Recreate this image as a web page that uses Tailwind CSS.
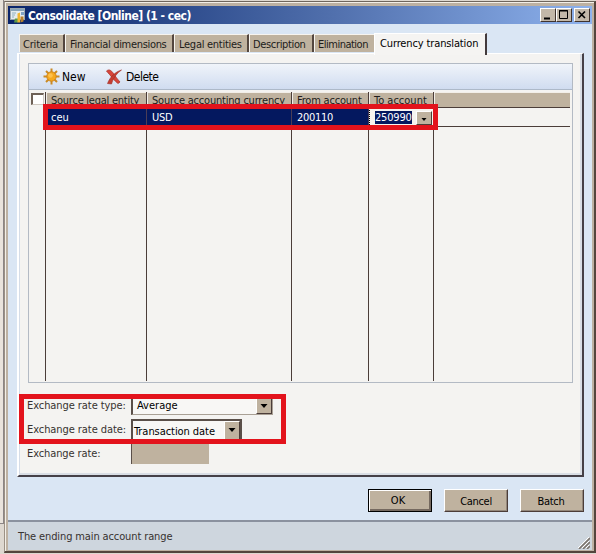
<!DOCTYPE html>
<html lang="en">
<head>
<meta charset="utf-8">
<title>Consolidate</title>
<script src="https://cdn.jsdelivr.net/npm/@tailwindcss/browser@4"></script>
</head>
<body class="w-[596px] h-[554px] overflow-hidden bg-[#ded8d0] font-['DejaVu_Sans_Condensed','DejaVu_Sans',sans-serif] text-[11px] leading-[14px] text-[#211c1a]">
<div class="flex w-[596px] h-[554px]">
  <!-- window behind -->
  <div class="w-[4px] h-[524px] shrink-0 bg-[#e9e3dc] border-r border-b border-[#8b8585]"></div>
  <!-- dialog frame -->
  <div class="w-[592px] h-[554px] shrink-0 pt-px">
    <div class="h-[552px] w-[592px] border-t border-l border-r-2 border-b-2 border-t-[#6e655c] border-l-[#9b9186] border-r-[#54453d] border-b-[#54453d] bg-[#bdb1a2] pl-[3px] pt-[4px] pr-[2px] pb-[2px] flex flex-col shadow-[inset_1px_1px_0_#f3efe8]">
      <!-- title bar -->
      <div class="h-[18px] shrink-0 flex items-center bg-linear-to-r from-[#0a246a] via-[#506fac] via-55% to-[#8eb2ed] pl-[2px] pr-[2px]">
        <svg width="16" height="16" viewBox="0 0 16 16" class="shrink-0">
          <rect x="0.5" y="1.500" width="14" height="11" fill="#e4ebee" stroke="#9aa6ae"/>
          <rect x="1" y="2" width="13" height="2" fill="#86a3b8"/>
          <path d="M2 6h4M2 8h3M2 10h2" stroke="#8fb0c0"/>
          <path d="M11 5h3v3h-3z" fill="#7fa3c4"/>
          <path d="M4 15.500l1-4h3v4z" fill="#5f9a48"/>
          <path d="M7.500 15.500V6.500l2.500-1v10z" fill="#efb531"/>
          <path d="M10.500 15.500v-6h3v5z" fill="#b9822c"/>
        </svg>
        <span class="ml-[2px] pt-px font-bold text-white whitespace-nowrap text-[12px] tracking-[-0.5px]">Consolidate [Online] (1 - cec)</span>
        <div class="ml-auto flex">
          <div class="w-[16px] h-[14px] bg-[#c3b8a9] border-t border-l border-t-white border-l-white border-r border-b border-r-[#3f332e] border-b-[#3f332e]"><svg width="14" height="12"><path d="M3 8.500h6v2H3z" fill="#000"/></svg></div>
          <div class="w-[16px] h-[14px] bg-[#c3b8a9] border-t border-l border-t-white border-l-white border-r border-b border-r-[#3f332e] border-b-[#3f332e]"><svg width="14" height="12"><path d="M2.500 1.500h8v8h-8zM2 2h9" fill="none" stroke="#000"/></svg></div>
          <div class="ml-[2px] w-[16px] h-[14px] bg-[#c3b8a9] border-t border-l border-t-white border-l-white border-r border-b border-r-[#3f332e] border-b-[#3f332e]"><svg width="14" height="12"><path d="M3.500 2.500l6.500 6.500M10 2.500L3.500 9" stroke="#000" stroke-width="1.6"/></svg></div>
        </div>
      </div>
      <!-- client area -->
      <div class="h-[496px] shrink-0 bg-[#dae6f4] pl-[9px] pr-[2px] pt-[9px]">
        <!-- tabs -->
        <div class="flex items-end h-[21px] pl-[2px] relative z-10 whitespace-nowrap">
          <div class="w-[46px] h-[18px] mb-[2px] bg-[#bfb29f] border-t border-l border-[#f7f4ef] border-r-2 border-r-[#53463f] pl-[3px] pt-[3px]"><span class="tracking-[-0.2px]">Criteria</span></div>
          <div class="w-[109px] h-[18px] mb-[2px] bg-[#bfb29f] border-t border-l border-[#f7f4ef] border-r-2 border-r-[#53463f] pl-[4px] pt-[3px]"><span class="tracking-[-0.32px]">Financial dimensions</span></div>
          <div class="w-[75px] h-[18px] mb-[2px] bg-[#bfb29f] border-t border-l border-[#f7f4ef] border-r-2 border-r-[#53463f] pl-[4px] pt-[3px]"><span class="tracking-[-0.27px]">Legal entities</span></div>
          <div class="w-[65px] h-[18px] mb-[2px] bg-[#bfb29f] border-t border-l border-[#f7f4ef] border-r-2 border-r-[#53463f] pl-[3px] pt-[3px]"><span class="tracking-[-0.35px]">Description</span></div>
          <div class="w-[60px] h-[18px] mb-[2px] bg-[#bfb29f] border-t border-l border-[#f7f4ef] pl-[3px] pt-[3px]"><span class="tracking-[-0.5px]">Elimination</span></div>
          <div class="w-[113px] h-[22px] -mb-px bg-[#f5f4f2] border-t border-l border-white border-r-2 border-r-[#423a3c] pl-[5px] pt-[3px] text-black"><span class="tracking-[-0.13px]">Currency translation</span></div>
        </div>
        <!-- tab page -->
        <div class="w-[567px] h-[424px] -mt-px bg-[#f4f3f1] border-t border-l-2 border-t-white border-l-white border-r-2 border-b-2 border-r-[#454047] border-b-[#454047] shadow-[inset_-2px_-2px_0_#d9dee5,inset_1px_0_0_#d5dde8] pl-[9px] pt-[9px]">
          <div class="w-[545px] h-[320px] border border-[#b3bac4] flex flex-col">
            <div class="h-[26px] shrink-0 flex items-center bg-linear-to-b from-[#f0f4fa] to-[#d0dcf0] border-b border-[#adb9c9] pl-[14px] text-[12px] text-black">
              <svg width="17" height="17" viewBox="0 0 17 17"><g stroke="#c98a24" stroke-width="2"><path d="M8.500 0.500v16M0.500 8.500h16M3 3l11 11M14 3L3 14"/></g><circle cx="8.500" cy="8.500" r="4.700" fill="#f6a91d" stroke="#d18418"/><circle cx="7.500" cy="7.500" r="2.300" fill="#ffc04a"/></svg>
              <span class="ml-[2px] w-[43px]">New</span>
              <svg width="18" height="16" viewBox="0 0 18 16" class="ml-px"><path d="M0.500 2C3 0 5 1 7.500 4.500c2 3 4 6 6.500 8.500l-2 1.500C8.500 12 5 7 0.500 2z" fill="#d8453a" stroke="#a9342c" stroke-width=".8"/><path d="M15.500 1C11 4 7 9 5.500 15l-4-.5C4 8 9 3 15.500 1z" fill="#c53d31" stroke="#9d2a22" stroke-width=".6"/></svg>
              <span class="ml-[2px] tracking-[-0.5px]">Delete</span>
            </div>
            <div class="grow flex flex-col pt-[2px] relative">
              <div class="flex h-[16px] whitespace-nowrap">
                <div class="w-[16px] pt-px pl-[2px]"><div class="w-[13px] h-[12px] bg-white border-t-2 border-l-2 border-t-[#6e6157] border-l-[#6e6157] border-b border-r border-b-[#cfc8c0] border-r-[#cfc8c0]"></div></div>
                <div class="w-[102px] bg-[#bfb29f] border-l border-r border-l-[#4b3d39] border-r-[#4b3d39] shadow-[inset_1px_1px_0_#f2eee8] pl-[5px] pt-[2px] tracking-[-0.25px]">Source legal entity</div>
                <div class="w-[145px] bg-[#bfb29f] border-r border-r-[#4b3d39] shadow-[inset_1px_1px_0_#f2eee8] pl-[5px] pt-[2px] tracking-[-0.2px]">Source accounting currency</div>
                <div class="w-[77px] bg-[#bfb29f] border-r border-r-[#4b3d39] shadow-[inset_1px_1px_0_#f2eee8] pl-[5px] pt-[2px] tracking-[-0.2px]">From account</div>
                <div class="w-[65px] bg-[#bfb29f] border-r border-r-[#4b3d39] shadow-[inset_1px_1px_0_#f2eee8] pl-[5px] pt-[2px]">To account</div>
                <div class="w-[136px] bg-[#bfb29f] border-b border-b-[#4b3d39] shadow-[inset_1px_1px_0_#f2eee8]"></div>
              </div>
              <div class="flex h-[19px] text-white">
                <div class="w-[16px]"></div>
                <div class="w-[102px] bg-[#04185f] border-r border-r-[#4b3d56] pl-[6px] pt-[3px]">ceu</div>
                <div class="w-[145px] bg-[#04185f] border-r border-r-[#4b3d56] pl-[5px] pt-[3px] tracking-[-0.3px]">USD</div>
                <div class="w-[77px] bg-[#04185f] border-r border-r-[#4b3d56] pl-[5px] pt-[3px] tracking-[-0.3px]">200110</div>
                <div class="w-[65px] bg-[#f6f4f0] border-l border-dotted border-black flex items-start pl-[5px] pt-[3px]">
                  <span class="bg-[#04185f] h-[13px] w-[37px] leading-[14px] tracking-[-0.2px]">250990</span>
                  <span class="ml-[4px] w-[16px] h-[14px] bg-[#bfb29f] border border-t-white border-l-white border-r-[#4b3d39] border-b-[#4b3d39]"><svg width="14" height="12"><path d="M4.500 6h5L7 9z" fill="#000"/></svg></span>
                </div>
                <div class="w-[136px] border-b border-b-[#4b3d39]"></div>
              </div>
              <div class="flex h-[254px]">
                <div class="w-[17px] border-r border-[#4b3d39]"></div>
                <div class="w-[101px] border-r border-[#4b3d39]"></div>
                <div class="w-[145px] border-r border-[#4b3d39]"></div>
                <div class="w-[77px] border-r border-[#4b3d39]"></div>
                <div class="w-[65px] border-r border-[#4b3d39]"></div>
              </div>
              <!-- row highlight -->
              <div class="absolute left-[14px] top-[14px] w-[395px] h-[26px] border-5 border-[#e3131c]"></div>
            </div>
          </div>
          <!-- exchange rate fields -->
          <div class="relative mt-[12px] -ml-px text-[#37322f]">
            <div class="flex h-[21px]">
              <div class="w-[104px] pt-[4px] tracking-[-0.07px]">Exchange rate type:</div>
              <div class="mt-[2px] w-[142px] h-[18px] bg-[#f8f7f5] border border-l-2 border-l-[#5a4f49] border-[#a9a095] flex text-black"><span class="grow pl-[4px] pt-px">Average</span><span class="w-[16px] h-[16px] bg-[#bfb29f] border border-l-white border-t-white border-r-[#4b3d39] border-b-[#4b3d39]"><svg width="14" height="14"><path d="M3.500 5h7L7 9z" fill="#000"/></svg></span></div>
            </div>
            <div class="flex h-[26px]">
              <div class="w-[104px] pt-[7px] tracking-[-0.07px]">Exchange rate date:</div>
              <div class="mt-[3px] w-[111px] h-[21px] bg-[#f8f7f5] border-t-2 border-l-2 border-r-2 border-[#5a4f49] flex text-black whitespace-nowrap"><span class="grow pl-px pt-[4px] tracking-[-0.06px]">Transaction date</span><span class="w-[16px] h-[19px] bg-[#bfb29f] border border-l-white border-t-white border-r-[#4b3d39] border-b-[#4b3d39]"><svg width="14" height="16"><path d="M3.500 6h7L7 10z" fill="#000"/></svg></span></div>
            </div>
            <div class="flex h-[24px]">
              <div class="w-[104px] pt-[5px] tracking-[-0.1px]">Exchange rate:</div>
              <div class="w-[78px] h-[22px] bg-[#bfb29f] border-l border-[#5a4f49]"></div>
            </div>
            <div class="absolute -left-[8px] -top-[1px] w-[267px] h-[50px] border-5 border-[#e3131c]"></div>
          </div>
        </div>
        <!-- dialog buttons -->
        <div class="flex gap-[12px] pl-[351px] pt-[12px] text-center text-black">
          <div class="w-[64px] h-[23px] bg-[#bfb29f] border border-black shadow-[inset_1px_1px_0_#fff,inset_-2px_-2px_0_#75695f] pt-[4px] pr-[4px]">OK</div>
          <div class="w-[64px] h-[23px] bg-[#bfb29f] border border-l-white border-t-white border-r-[#4b3d39] border-b-[#4b3d39] shadow-[inset_-1px_-1px_0_#93877b] pt-[5px] tracking-[-0.3px]">Cancel</div>
          <div class="w-[64px] h-[23px] bg-[#bfb29f] border border-l-white border-t-white border-r-[#4b3d39] border-b-[#4b3d39] shadow-[inset_-1px_-1px_0_#93877b] pt-[5px] pr-[2px] tracking-[-0.3px]">Batch</div>
        </div>
      </div>
      <!-- status bar -->
      <div class="h-[30px] shrink-0 bg-[#ced6de] border-t-2 border-t-[#8b929f] flex pl-[10px] pt-[8px] pr-[2px] text-[#37322f]">
        <span class="tracking-[-0.12px]">The ending main account range</span>
        <svg class="ml-auto mt-[7px]" width="12" height="12"><path d="M1 12L12 1M5 12l7-7M9 12l3-3" stroke="#7d756d" stroke-width="1.600"/><path d="M0 11L11 0M4 11l7-7M8 11l3-3" stroke="#fff"/></svg>
      </div>
    </div>
  </div>
</div>
</body>
</html>
